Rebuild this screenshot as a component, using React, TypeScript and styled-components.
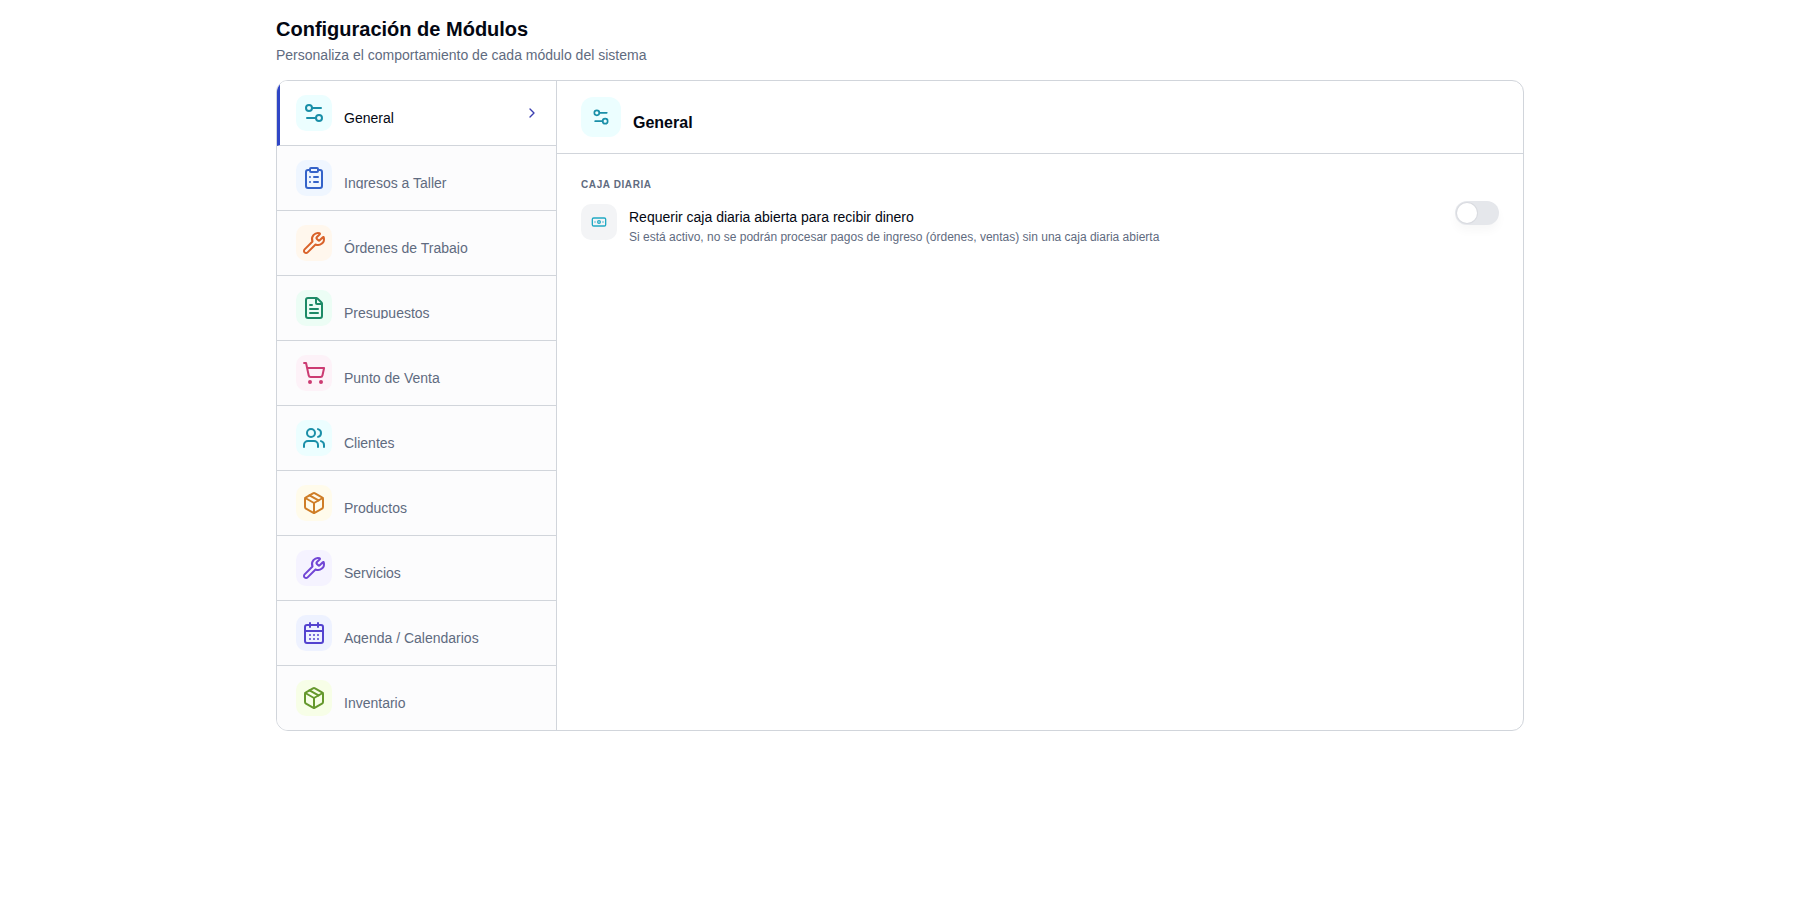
import React from 'react'
import styled, { createGlobalStyle } from 'styled-components'
import {
  Banknote,
  CalendarDays,
  ChevronRight,
  ClipboardList,
  FileText,
  Package,
  Settings2,
  ShoppingCart,
  Users,
  Wrench,
} from 'lucide-react'

const GlobalStyle = createGlobalStyle`
  html, body {
    margin: 0;
    padding: 0;
    background: #ffffff;
    font-family: "Liberation Sans", Arial, sans-serif;
  }
`

const Page = styled.div`
  width: 1248px;
  margin: 0 auto;
  padding-top: 16px;
`

const Title = styled.h1`
  margin: 0;
  font-size: 20px;
  line-height: 26px;
  font-weight: 700;
  color: #030712;
`

const Subtitle = styled.p`
  margin: 3px 0 15px;
  font-size: 14px;
  line-height: 20px;
  color: #5f6b80;
`

const Card = styled.div`
  display: flex;
  height: 651px;
  box-sizing: border-box;
  border: 1px solid #d1d5db;
  border-radius: 12px;
  overflow: hidden;
  background: #ffffff;
`

const Sidebar = styled.nav`
  width: 280px;
  flex-shrink: 0;
  box-sizing: border-box;
  background: #fcfcfd;
  border-right: 1px solid #d1d5db;
`

const NavRow = styled.div<{ $active?: boolean }>`
  display: flex;
  height: 65px;
  box-sizing: border-box;
  align-items: flex-start;
  gap: 12px;
  padding: 14px 16px 0 ${(p) => (p.$active ? 16 : 19)}px;
  border-left: ${(p) => (p.$active ? '3px solid #2f46c6' : 'none')};
  border-bottom: 1px solid #d1d5db;
  background: ${(p) => (p.$active ? '#ffffff' : 'transparent')};
  color: ${(p) => (p.$active ? '#030712' : '#5f6b80')};

  &:last-child {
    border-bottom: none;
  }
`

const IconBox = styled.div<{ $bg: string; $fg: string; $size: number; $radius?: number }>`
  display: flex;
  flex-shrink: 0;
  align-items: center;
  justify-content: center;
  width: ${(p) => p.$size}px;
  height: ${(p) => p.$size}px;
  border-radius: ${(p) => p.$radius ?? 10}px;
  background: ${(p) => p.$bg};
  color: ${(p) => p.$fg};
`

const NavLabel = styled.span`
  flex: 1;
  margin-top: 15px;
  height: 14px;
  overflow: hidden;
  font-size: 14px;
  line-height: 16px;
`

const Chevron = styled(ChevronRight)`
  flex-shrink: 0;
  margin-top: 10px;
  color: #3b3fb0;
`

const Main = styled.section`
  flex: 1;
  min-width: 0;
`

const MainHeader = styled.header`
  display: flex;
  align-items: center;
  gap: 12px;
  height: 73px;
  box-sizing: border-box;
  padding: 0 24px;
  border-bottom: 1px solid #d1d5db;
`

const MainTitle = styled.h2`
  margin: 0;
  padding-top: 12px;
  font-size: 16px;
  font-weight: 700;
  color: #030712;
`

const MainBody = styled.div`
  padding: 24px 24px 0;
`

const SectionLabel = styled.div`
  font-size: 10px;
  line-height: 14px;
  font-weight: 700;
  letter-spacing: 0.6px;
  text-transform: uppercase;
  color: #5f6b80;
`

const SettingRow = styled.div`
  display: flex;
  align-items: flex-start;
  gap: 12px;
  margin-top: 12px;
`

const SettingText = styled.div`
  flex: 1;
  padding-top: 4px;
`

const SettingTitle = styled.div`
  font-size: 14px;
  line-height: 18px;
  color: #030712;
`

const SettingHint = styled.div`
  margin-top: 3px;
  font-size: 12px;
  line-height: 16px;
  color: #5f6b80;
`

const Toggle = styled.div`
  display: flex;
  align-items: center;
  flex-shrink: 0;
  width: 44px;
  height: 24px;
  margin-top: -3px;
  padding: 2px;
  box-sizing: border-box;
  border-radius: 12px;
  background: #e5e7eb;
  box-shadow: 0 6px 10px rgba(0, 0, 0, 0.03);
`

const Knob = styled.span`
  width: 20px;
  height: 20px;
  border-radius: 50%;
  background: #ffffff;
  box-shadow: 0 0 0 1px #d9dbe0;
`

const modules = [
  { label: 'General', icon: Settings2, bg: '#ecfeff', fg: '#1a8fa8' },
  { label: 'Ingresos a Taller', icon: ClipboardList, bg: '#eff6ff', fg: '#3563c9' },
  { label: 'Órdenes de Trabajo', icon: Wrench, bg: '#fff7ed', fg: '#d9622a' },
  { label: 'Presupuestos', icon: FileText, bg: '#ecfdf5', fg: '#1d8a66' },
  { label: 'Punto de Venta', icon: ShoppingCart, bg: '#fdf2f8', fg: '#cc3a72' },
  { label: 'Clientes', icon: Users, bg: '#ecfeff', fg: '#1a8fa8' },
  { label: 'Productos', icon: Package, bg: '#fffbeb', fg: '#cf7d26' },
  { label: 'Servicios', icon: Wrench, bg: '#f5f3ff', fg: '#7146d5' },
  { label: 'Agenda / Calendarios', icon: CalendarDays, bg: '#eef2ff', fg: '#5343cf' },
  { label: 'Inventario', icon: Package, bg: '#f7fee7', fg: '#65982c' },
]

export default function App() {
  return (
    <>
      <GlobalStyle />
      <Page>
        <Title>Configuración de Módulos</Title>
        <Subtitle>Personaliza el comportamiento de cada módulo del sistema</Subtitle>
        <Card>
          <Sidebar>
            {modules.map((m, i) => (
              <NavRow key={m.label} $active={i === 0}>
                <IconBox $bg={m.bg} $fg={m.fg} $size={36}>
                  <m.icon size={24} strokeWidth={2} />
                </IconBox>
                <NavLabel>{m.label}</NavLabel>
                {i === 0 && <Chevron size={16} />}
              </NavRow>
            ))}
          </Sidebar>
          <Main>
            <MainHeader>
              <IconBox $bg="#ecfeff" $fg="#1a8fa8" $size={40} $radius={12}>
                <Settings2 size={20} />
              </IconBox>
              <MainTitle>General</MainTitle>
            </MainHeader>
            <MainBody>
              <SectionLabel>Caja diaria</SectionLabel>
              <SettingRow>
                <IconBox $bg="#f3f4f6" $fg="#22a9c4" $size={36}>
                  <Banknote size={16} />
                </IconBox>
                <SettingText>
                  <SettingTitle>Requerir caja diaria abierta para recibir dinero</SettingTitle>
                  <SettingHint>
                    Si está activo, no se podrán procesar pagos de ingreso (órdenes, ventas) sin una caja diaria abierta
                  </SettingHint>
                </SettingText>
                <Toggle>
                  <Knob />
                </Toggle>
              </SettingRow>
            </MainBody>
          </Main>
        </Card>
      </Page>
    </>
  )
}
